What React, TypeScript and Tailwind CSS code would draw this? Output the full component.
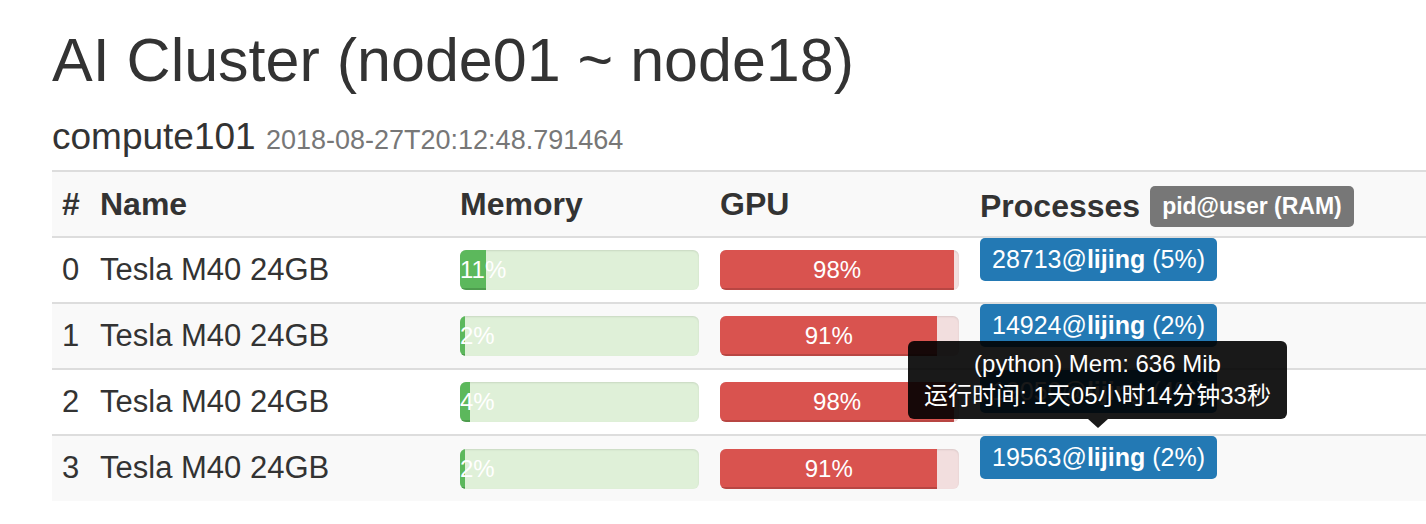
import React from "react";

type Proc = { pid: string; user: string; ram: string };
type Gpu = { id: number; name: string; mem: number; util: number; procs: Proc[] };

const gpus: Gpu[] = [
  { id: 0, name: "Tesla M40 24GB", mem: 11, util: 98, procs: [{ pid: "28713", user: "lijing", ram: "5%" }] },
  { id: 1, name: "Tesla M40 24GB", mem: 2, util: 91, procs: [{ pid: "14924", user: "lijing", ram: "2%" }] },
  { id: 2, name: "Tesla M40 24GB", mem: 4, util: 98, procs: [{ pid: "19050", user: "lijing", ram: "4%" }] },
  { id: 3, name: "Tesla M40 24GB", mem: 2, util: 91, procs: [{ pid: "19563", user: "lijing", ram: "2%" }] },
];

function Bar({ value, track, fill }: { value: number; track: string; fill: string }) {
  return (
    <div className={`flex h-[40px] w-[239px] overflow-hidden rounded-[6px] shadow-[inset_0_1px_2px_rgba(0,0,0,0.1)] ${track}`}>
      <div
        className={`h-full shrink-0 whitespace-nowrap text-center text-[24px] leading-[40px] text-white shadow-[inset_0_-2px_0_rgba(0,0,0,0.15)] ${fill}`}
        style={{ width: `${value}%` }}
      >
        {value}%
      </div>
    </div>
  );
}

function ProcBadge({ p }: { p: Proc }) {
  return (
    <span className="inline-block rounded-[5px] bg-[#2379b4] px-[12px] text-[25px] leading-[43px] text-white">
      {p.pid}@<b>{p.user}</b> ({p.ram})
    </span>
  );
}

export default function App() {
  return (
    <div className="min-h-[524px] bg-white pl-[52px] font-['Liberation_Sans',Arial,sans-serif] text-[#333]">
      <h1 className="pt-[25px] text-[61px] leading-[70px]">AI Cluster (node01 ~ node18)</h1>
      <h3 className="mt-[22px] text-[37px] leading-[40px]">
        compute101 <small className="text-[27px] text-[#777]">2018-08-27T20:12:48.791464</small>
      </h3>

      <table className="mt-[10px] w-full border-collapse">
        <thead>
          <tr className="h-[66px] border-t-2 border-b-2 border-[#ddd] bg-[#f9f9f9] text-left text-[32px] font-bold">
            <th className="w-[38px] pl-[10px] align-middle">#</th>
            <th className="w-[360px] pl-[10px] align-middle">Name</th>
            <th className="w-[260px] pl-[10px] align-middle">Memory</th>
            <th className="w-[260px] pl-[10px] align-middle">GPU</th>
            <th className="pl-[10px] align-middle">
              <div className="flex items-center gap-[10px] pt-[4px]">
                Processes
                <span className="rounded-[5px] bg-[#777] px-[12px] text-[23px] leading-[41px] text-white">pid@user (RAM)</span>
              </div>
            </th>
          </tr>
        </thead>
        <tbody>
          {gpus.map((g, i) => (
            <tr key={g.id} className={`h-[66px] border-b-2 border-[#ddd] text-[31px] last:border-b-0 ${i % 2 === 1 ? "bg-[#f9f9f9]" : "bg-white"}`}>
              <td className="pl-[10px] align-middle">{g.id}</td>
              <td className="pl-[10px] align-middle">{g.name}</td>
              <td className="pl-[10px] align-middle">
                <Bar value={g.mem} track="bg-[#dff0d8]" fill="bg-[#5cb85c] text-left" />
              </td>
              <td className="pl-[10px] align-middle">
                <Bar value={g.util} track="bg-[#f2dede]" fill="bg-[#d9534f]" />
              </td>
              <td className="relative pl-[10px] align-top">
                <div className="flex gap-[6px]">
                  {g.procs.map((p) => (
                    <ProcBadge key={p.pid} p={p} />
                  ))}
                </div>
                {i === 2 && (
                  <div className="absolute left-[-62px] top-[-29px] z-10 flex w-[379px] flex-col items-center rounded-[6px] bg-[rgba(0,0,0,0.9)] py-[7px] text-[24px] leading-[32px] text-white">
                    <span className="whitespace-nowrap">(python) Mem: 636 Mib</span>
                    <span className="whitespace-nowrap font-['Liberation_Sans','Noto_Sans_CJK_SC',sans-serif]">运行时间: 1天05小时14分钟33秒</span>
                    <div className="absolute bottom-[-9px] left-1/2 h-0 w-0 -translate-x-1/2 border-x-[10px] border-t-[9px] border-x-transparent border-t-[rgba(0,0,0,0.9)]" />
                  </div>
                )}
              </td>
            </tr>
          ))}
        </tbody>
      </table>
    </div>
  );
}
